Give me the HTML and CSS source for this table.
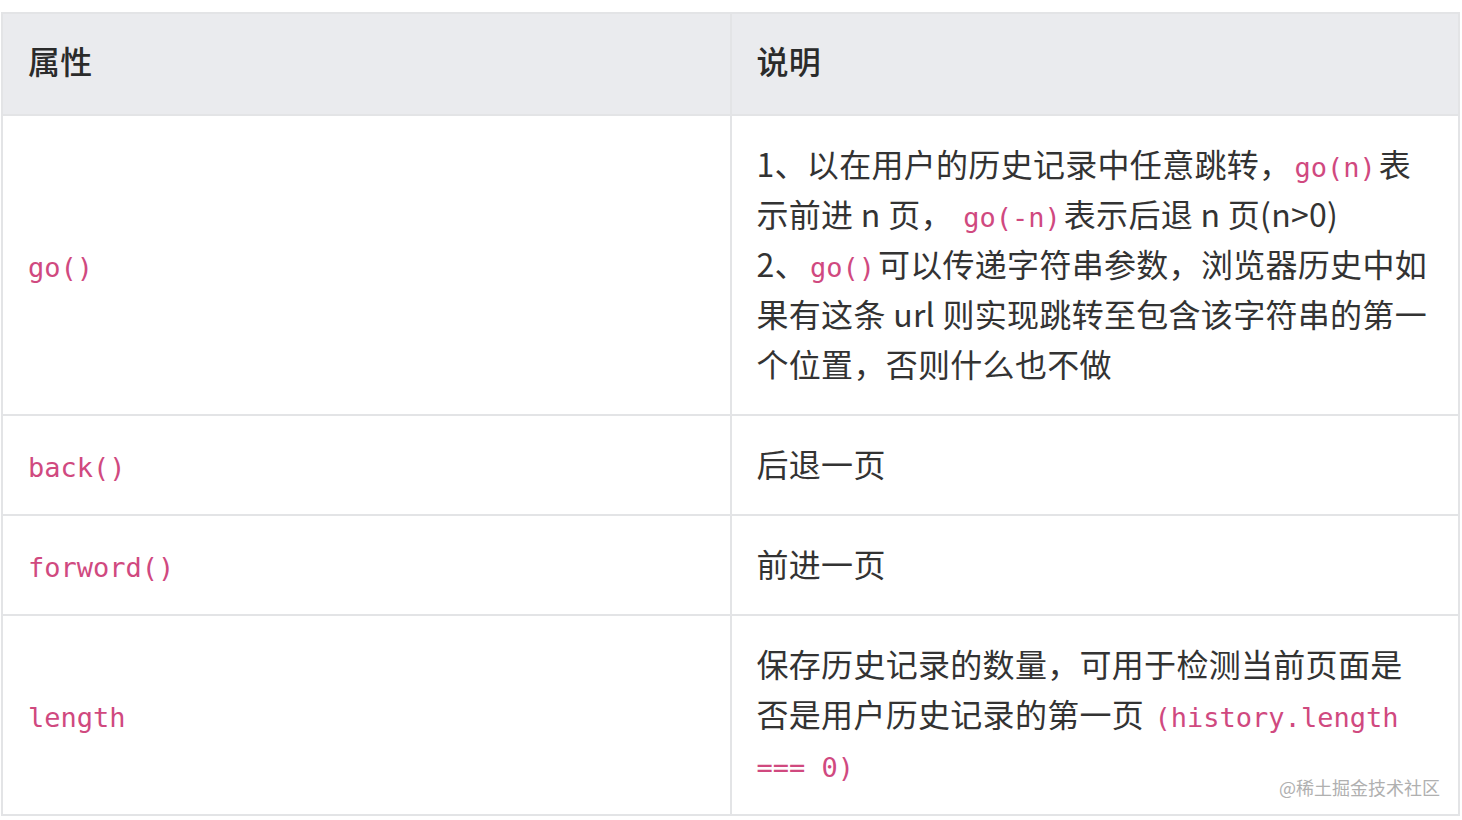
FILE: index.html
```html
<!DOCTYPE html>
<html lang="zh-CN">
<head>
<meta charset="utf-8">
<title>history 属性</title>
<link rel="stylesheet" href="styles.css">
</head>
<body>
<div class="wrap">
  <table class="api">
    <thead>
      <tr><th>属性</th><th>说明</th></tr>
    </thead>
    <tbody>
      <tr>
        <td class="name"><code>go()</code></td>
        <td>1、以在用户的历史记录中任意跳转，<code>go(n)</code>表<br>示前进 n 页， <code>go(-n)</code>表示后退 n 页(n&gt;0)<br>2、<code>go()</code>可以传递字符串参数，浏览器历史中如<br>果有这条 url 则实现跳转至包含该字符串的第一<br>个位置，否则什么也不做</td>
      </tr>
      <tr>
        <td class="name"><code>back()</code></td>
        <td>后退一页</td>
      </tr>
      <tr>
        <td class="name"><code>forword()</code></td>
        <td>前进一页</td>
      </tr>
      <tr>
        <td class="name"><code>length</code></td>
        <td>保存历史记录的数量，可用于检测当前页面是<br>否是用户历史记录的第一页 <code>(history.length<br>=== 0)</code></td>
      </tr>
    </tbody>
  </table>
  <div class="watermark">@稀土掘金技术社区</div>
</div>
</body>
</html>
```
FILE: styles.css
```css
html, body {
  margin: 0;
  padding: 0;
  background: #fff;
}
body {
  font-family: "Noto Sans CJK SC", "Noto Sans", sans-serif;
  color: #333;
}
.wrap {
  position: relative;
  width: 1459px;
  margin: 12px 0 0 1px;
}
.api {
  width: 100%;
  table-layout: fixed;
  border-collapse: collapse;
  font-size: 32px;
  line-height: 50px;
}
.api th, .api td {
  border: 2px solid #e3e4e6;
  text-align: left;
  vertical-align: middle;
  padding: 22px 18px 26px 25px;
  white-space: nowrap;
  letter-spacing: 0.3px;
}
.api th {
  background: #eaebee;
  font-weight: 500;
  color: #2b2b2b;
  padding-top: 21px;
  padding-bottom: 29px;
}
.api td {
  color: #333;
}
.api code {
  font-family: "DejaVu Sans Mono", "Liberation Mono", monospace;
  font-size: 27px;
  line-height: 1;
  letter-spacing: 0;
  color: #d0497f;
  padding: 0 3px;
}
.api .name {
  padding-left: 25px;
}
.api .name code {
  padding: 0;
}
.watermark {
  position: absolute;
  right: 20px;
  bottom: 19px;
  font-size: 18px;
  line-height: 20px;
  color: #b0b0b0;
  font-family: "Noto Sans CJK SC", sans-serif;
}
```
